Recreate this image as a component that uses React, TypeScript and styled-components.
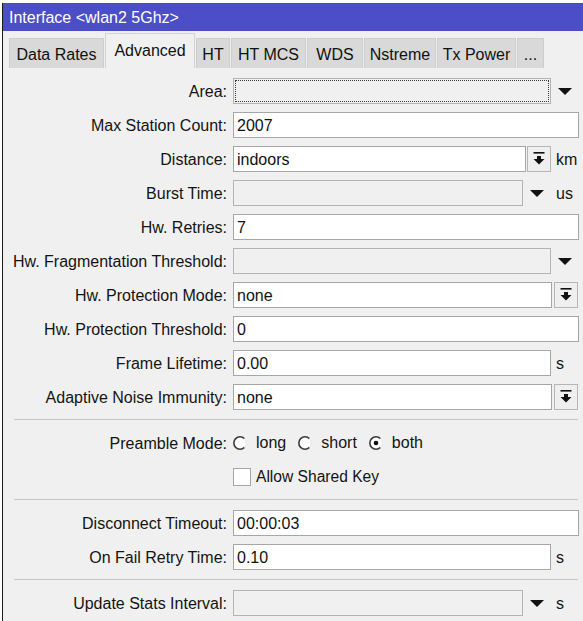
import React from "react";
import styled, { createGlobalStyle } from "styled-components";

const GlobalStyle = createGlobalStyle`
  html, body {
    margin: 0;
    padding: 0;
    background: #ffffff;
    overflow: hidden;
  }
  body {
    font-family: "Liberation Sans", Arial, sans-serif;
    color: #141414;
  }
`;

const Screen = styled.div`
  padding: 3px 0 0 2px;
  width: 583px;
  height: 621px;
  box-sizing: border-box;
`;

const Window = styled.div`
  border-left: 1px solid #1c1c1c;
  background: #f0f0f0;
  height: 100%;
  display: flex;
  flex-direction: column;
`;

const TitleBar = styled.div`
  height: 28px;
  background: #4b4ec6;
  color: #ffffff;
  font-size: 16px;
  line-height: 30px;
  padding-left: 6px;
  white-space: nowrap;
`;

const TabStrip = styled.div`
  display: flex;
  align-items: flex-end;
  height: 37px;
  padding-left: 6px;
`;

const Tab = styled.div<{ $active?: boolean; $w: number }>`
  box-sizing: border-box;
  width: ${(p) => p.$w}px;
  height: ${(p) => (p.$active ? 35 : 30)}px;
  margin-right: 1px;
  display: flex;
  align-items: center;
  justify-content: center;
  font-size: 16px;
  white-space: nowrap;
  color: #111;
  background: ${(p) => (p.$active ? "#f0f0f0" : "#d9d9d9")};
  border: 1px solid ${(p) => (p.$active ? "#d2d2d2" : "#cdcdcd")};
  border-bottom: none;
  padding-top: ${(p) => (p.$active ? 0 : 2)}px;
`;

const Form = styled.div`
  display: grid;
  grid-template-columns: 224px 1fr;
  column-gap: 6px;
  padding: 6px 4px 0 0;
`;

const Label = styled.div`
  box-sizing: border-box;
  height: 34px;
  padding-top: 1px;
  display: flex;
  align-items: center;
  justify-content: flex-end;
  font-size: 16px;
  white-space: nowrap;
  color: #141414;
`;

const FieldCell = styled.div`
  height: 34px;
  display: flex;
  align-items: center;
  min-width: 0;
`;

const Input = styled.div<{ $disabled?: boolean; $focused?: boolean }>`
  flex: 1;
  min-width: 0;
  box-sizing: border-box;
  height: 26px;
  border: 1px solid ${(p) => (p.$disabled ? "#b4b4b4" : "#a6a6a6")};
  background: ${(p) => (p.$disabled ? "#f0f0f0" : "#ffffff")};
  font-size: 16px;
  line-height: 25px;
  padding-left: 3px;
  color: #111;
  white-space: nowrap;
  overflow: hidden;
  outline: ${(p) => (p.$focused ? "1px dotted #3a3a3a" : "none")};
  outline-offset: -3px;
`;

const ArrowSlot = styled.div`
  width: 28px;
  display: flex;
  justify-content: center;
  align-items: center;
`;

const SquareButton = styled.div<{ $lead: number; $trail: number }>`
  box-sizing: border-box;
  width: 24px;
  height: 26px;
  margin-left: ${(p) => p.$lead}px;
  margin-right: ${(p) => p.$trail}px;
  border: 1px solid #b6b6b6;
  background: #efefef;
  display: flex;
  align-items: center;
  justify-content: center;
`;

const Unit = styled.div`
  width: 28px;
  box-sizing: border-box;
  padding: 1px 0 0 5px;
  font-size: 16px;
  color: #141414;
`;

const Separator = styled.div`
  grid-column: 1 / -1;
  height: 12px;
  display: flex;
  align-items: center;
  padding-left: 11px;
  padding-bottom: 1px;
  box-sizing: border-box;
  &::after {
    content: "";
    flex: 1;
    height: 1px;
    background: #c6c6c6;
    margin-right: 1px;
  }
`;

const RadioGroup = styled.div`
  display: flex;
  align-items: center;
  gap: 12px;
`;

const Choice = styled.div`
  display: flex;
  align-items: center;
  gap: 9px;
  font-size: 16px;
  color: #141414;
`;

const CheckRow = styled.div`
  display: flex;
  align-items: center;
  gap: 5px;
  font-size: 15.6px;
  color: #141414;
`;

const CheckBox = styled.div`
  width: 18px;
  height: 18px;
  box-sizing: border-box;
  border: 1px solid #a6a6a6;
  background: #ffffff;
`;

const Caret = () => (
  <svg width="14" height="7" viewBox="0 0 14 7">
    <polygon points="0,0 14,0 7,7" fill="#111" />
  </svg>
);

const MoveDownIcon = () => (
  <svg width="12" height="14" viewBox="0 0 12 14">
    <rect x="0.5" y="0" width="11" height="1.6" fill="#111" />
    <rect x="4" y="4" width="4" height="3.5" fill="#111" />
    <polygon points="0.5,7 11.5,7 6,12.5" fill="#111" />
  </svg>
);

// classic sunken radio: dark arc on the upper-left, pale rim on the lower-right
const Radio = ({ checked }: { checked?: boolean }) => (
  <svg width="14" height="14" viewBox="0 0 14 14">
    <circle cx="7" cy="7" r="6.2" fill="#ffffff" />
    <path d="M11.4 2.6 A6.2 6.2 0 1 0 11.4 11.4" fill="none" stroke="#3c3c3c" strokeWidth="1.6" />
    <path d="M11.4 11.4 A6.2 6.2 0 0 0 11.4 2.6" fill="none" stroke="#e6e6e6" strokeWidth="1" />
    {checked && <circle cx="7" cy="7" r="2.3" fill="#111" />}
  </svg>
);

const tabs: { name: string; w: number; active?: boolean }[] = [
  { name: "Data Rates", w: 95 },
  { name: "Advanced", w: 90, active: true },
  { name: "HT", w: 34 },
  { name: "HT MCS", w: 75 },
  { name: "WDS", w: 56 },
  { name: "Nstreme", w: 72 },
  { name: "Tx Power", w: 79 },
  { name: "...", w: 27 },
];

export default function App() {
  return (
    <>
      <GlobalStyle />
      <Screen>
        <Window>
          <TitleBar>Interface &lt;wlan2 5Ghz&gt;</TitleBar>
          <TabStrip>
            {tabs.map((t) => (
              <Tab key={t.name} $w={t.w} $active={t.active}>
                {t.name}
              </Tab>
            ))}
          </TabStrip>
          <Form>
            <Label>Area:</Label>
            <FieldCell>
              <Input $disabled $focused />
              <ArrowSlot>
                <Caret />
              </ArrowSlot>
            </FieldCell>

            <Label>Max Station Count:</Label>
            <FieldCell>
              <Input>2007</Input>
            </FieldCell>

            <Label>Distance:</Label>
            <FieldCell>
              <Input>indoors</Input>
              <SquareButton $lead={1} $trail={0}>
                <MoveDownIcon />
              </SquareButton>
              <Unit>km</Unit>
            </FieldCell>

            <Label>Burst Time:</Label>
            <FieldCell>
              <Input $disabled />
              <ArrowSlot>
                <Caret />
              </ArrowSlot>
              <Unit>us</Unit>
            </FieldCell>

            <Label>Hw. Retries:</Label>
            <FieldCell>
              <Input>7</Input>
            </FieldCell>

            <Label>Hw. Fragmentation Threshold:</Label>
            <FieldCell>
              <Input $disabled />
              <ArrowSlot>
                <Caret />
              </ArrowSlot>
            </FieldCell>

            <Label>Hw. Protection Mode:</Label>
            <FieldCell>
              <Input>none</Input>
              <SquareButton $lead={2} $trail={1}>
                <MoveDownIcon />
              </SquareButton>
            </FieldCell>

            <Label>Hw. Protection Threshold:</Label>
            <FieldCell>
              <Input>0</Input>
            </FieldCell>

            <Label>Frame Lifetime:</Label>
            <FieldCell>
              <Input>0.00</Input>
              <Unit>s</Unit>
            </FieldCell>

            <Label>Adaptive Noise Immunity:</Label>
            <FieldCell>
              <Input>none</Input>
              <SquareButton $lead={2} $trail={1}>
                <MoveDownIcon />
              </SquareButton>
            </FieldCell>

            <Separator />

            <Label>Preamble Mode:</Label>
            <FieldCell>
              <RadioGroup>
                <Choice>
                  <Radio />
                  long
                </Choice>
                <Choice>
                  <Radio />
                  short
                </Choice>
                <Choice>
                  <Radio checked />
                  both
                </Choice>
              </RadioGroup>
            </FieldCell>

            <Label />
            <FieldCell>
              <CheckRow>
                <CheckBox />
                Allow Shared Key
              </CheckRow>
            </FieldCell>

            <Separator />

            <Label>Disconnect Timeout:</Label>
            <FieldCell>
              <Input>00:00:03</Input>
            </FieldCell>

            <Label>On Fail Retry Time:</Label>
            <FieldCell>
              <Input>0.10</Input>
              <Unit>s</Unit>
            </FieldCell>

            <Separator />

            <Label>Update Stats Interval:</Label>
            <FieldCell>
              <Input $disabled />
              <ArrowSlot>
                <Caret />
              </ArrowSlot>
              <Unit>s</Unit>
            </FieldCell>
          </Form>
        </Window>
      </Screen>
    </>
  );
}
